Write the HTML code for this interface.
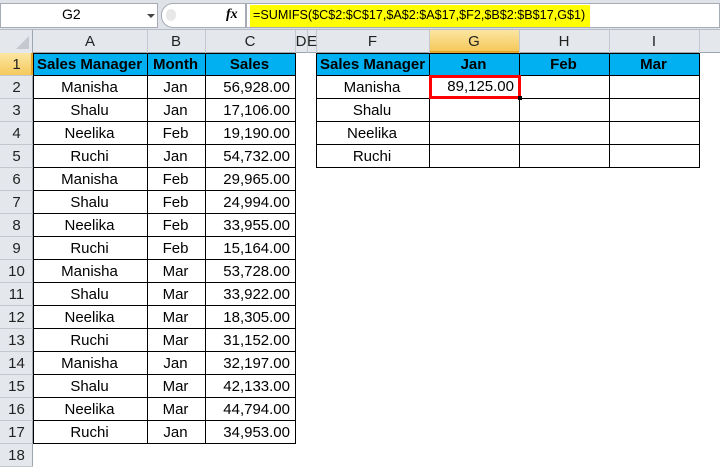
<!DOCTYPE html>
<html><head><style>
body{margin:0;width:720px;height:467px;overflow:hidden;background:#fff;font-family:"Liberation Sans",sans-serif;position:relative}
.a{position:absolute;box-sizing:border-box}
.t{position:absolute;font-size:15px;line-height:23px;white-space:nowrap;color:#000}
</style></head><body>
<div class="a" style="left:0;top:0;width:720px;height:30px;background:#dfe3e8;border-bottom:1px solid #b6bcc6"></div>
<div class="a" style="left:0;top:3px;width:158px;height:25px;background:#fff;border:1px solid #a5acb5"></div>
<div class="t" style="left:62px;top:3px;font-size:14px">G2</div>
<div class="a" style="left:147px;top:14px;width:0;height:0;border-left:4px solid transparent;border-right:4px solid transparent;border-top:4px solid #444"></div>
<div class="a" style="left:161px;top:3px;width:85px;height:25px;background:#fff;border:1px solid #a5acb5;border-radius:12px 0 0 12px"></div>
<div class="a" style="left:166px;top:9px;width:10px;height:12px;background:#e8e8e8;border-radius:5px"></div>
<div class="t" style="left:226px;top:3px;font-family:'Liberation Serif',serif;font-style:italic;font-weight:bold;font-size:14px">fx</div>
<div class="a" style="left:246px;top:3px;width:474px;height:25px;background:#fff;border:1px solid #a5acb5"></div>
<div class="a" style="left:250px;top:5px;width:340px;height:22px;background:#ffff00"></div>
<div class="t" style="left:253px;top:4px;font-size:12.6px">=SUMIFS($C$2:$C$17,$A$2:$A$17,$F2,$B$2:$B$17,G$1)</div>
<div class="a" style="left:0;top:30px;width:720px;height:23px;background:#e4e7ec;border-bottom:1px solid #9ea6b0"></div>
<div class="a" style="left:0;top:30px;width:33px;height:437px;background:#e4e7ec;border-right:1px solid #9ea6b0"></div>
<div class="a" style="left:16px;top:36px;width:0;height:0;border-left:13px solid transparent;border-bottom:13px solid #c5c9cf"></div>
<div class="a" style="left:429px;top:30px;width:91px;height:23px;background:linear-gradient(#fbe6a2,#f5c85a);border-bottom:2px solid #e3a72e"></div>
<div class="a" style="left:0;top:53px;width:33px;height:23px;background:linear-gradient(#fbe6a2,#f5c85a);border-right:2px solid #e3a72e"></div>
<div id="grid"></div>
<script>
var cols=[[33,147,'A'],[147,205,'B'],[205,295,'C'],[295,307,'D'],[307,316,'E'],[316,429,'F'],[429,519,'G'],[519,609,'H'],[609,699,'I'],[699,760,'']];
var h='';
cols.forEach(function(c){h+='<div class="a" style="left:'+c[1]+'px;top:30px;width:1px;height:23px;background:#c3c8cf"></div>';
h+='<div class="t" style="left:'+c[0]+'px;width:'+(c[1]-c[0])+'px;text-align:center;top:30px;font-size:15px;color:#222">'+c[2]+'</div>';});
for(var r=1;r<=18;r++){var y=53+(r-1)*23;
h+='<div class="a" style="left:0;top:'+(y+22)+'px;width:33px;height:1px;background:#c3c8cf"></div>';
h+='<div class="t" style="left:0;width:33px;text-align:center;top:'+y+'px;color:#222">'+r+'</div>';}
var data=[["Manisha","Jan","56,928.00"],["Shalu","Jan","17,106.00"],["Neelika","Feb","19,190.00"],["Ruchi","Jan","54,732.00"],["Manisha","Feb","29,965.00"],["Shalu","Feb","24,994.00"],["Neelika","Feb","33,955.00"],["Ruchi","Feb","15,164.00"],["Manisha","Mar","53,728.00"],["Shalu","Mar","33,922.00"],["Neelika","Mar","18,305.00"],["Ruchi","Mar","31,152.00"],["Manisha","Jan","32,197.00"],["Shalu","Mar","42,133.00"],["Neelika","Mar","44,794.00"],["Ruchi","Jan","34,953.00"]];
h+='<div class="a" style="left:33px;top:53px;width:262px;height:23px;background:#00b0f0"></div>';
function cell(x,w,y,txt,al,b){return '<div class="t" style="left:'+(x+4)+'px;width:'+(w-9)+'px;text-align:'+al+';top:'+y+'px;'+(b?'font-weight:bold;':'')+'">'+txt+'</div>';}
h+=cell(33,114,53,'Sales Manager','center',1)+cell(147,58,53,'Month','center',1)+cell(205,90,53,'Sales','center',1);
data.forEach(function(d,i){var y=76+i*23;h+=cell(33,114,y,d[0],'center')+cell(147,58,y,d[1],'center')+cell(205,90,y,d[2],'right');});
for(var r=0;r<=17;r++)h+='<div class="a" style="left:33px;top:'+(53+r*23-(r==0?0:1))+'px;width:263px;height:1px;background:#000"></div>';
[33,147,205,295].forEach(function(x){h+='<div class="a" style="left:'+x+'px;top:53px;width:1px;height:391px;background:#000"></div>';});
h+='<div class="a" style="left:316px;top:53px;width:383px;height:23px;background:#00b0f0"></div>';
h+=cell(316,113,53,'Sales Manager','center',1)+cell(429,90,53,'Jan','center',1)+cell(519,90,53,'Feb','center',1)+cell(609,90,53,'Mar','center',1);
["Manisha","Shalu","Neelika","Ruchi"].forEach(function(n,i){h+=cell(316,113,76+i*23,n,'center');});
for(var r=0;r<=5;r++)h+='<div class="a" style="left:316px;top:'+(53+r*23-(r==0?0:1))+'px;width:384px;height:1px;background:#000"></div>';
[316,429,519,609,699].forEach(function(x){h+='<div class="a" style="left:'+x+'px;top:53px;width:1px;height:115px;background:#000"></div>';});
h+='<div class="a" style="left:429px;top:75px;width:92px;height:24px;border:3px solid #ff0000"></div>';
h+='<div class="a" style="left:518px;top:96px;width:4px;height:4px;background:#000"></div>';
h+=cell(431,88,75,'89,125.00','right');
document.getElementById('grid').innerHTML=h;
</script>
</body></html>
